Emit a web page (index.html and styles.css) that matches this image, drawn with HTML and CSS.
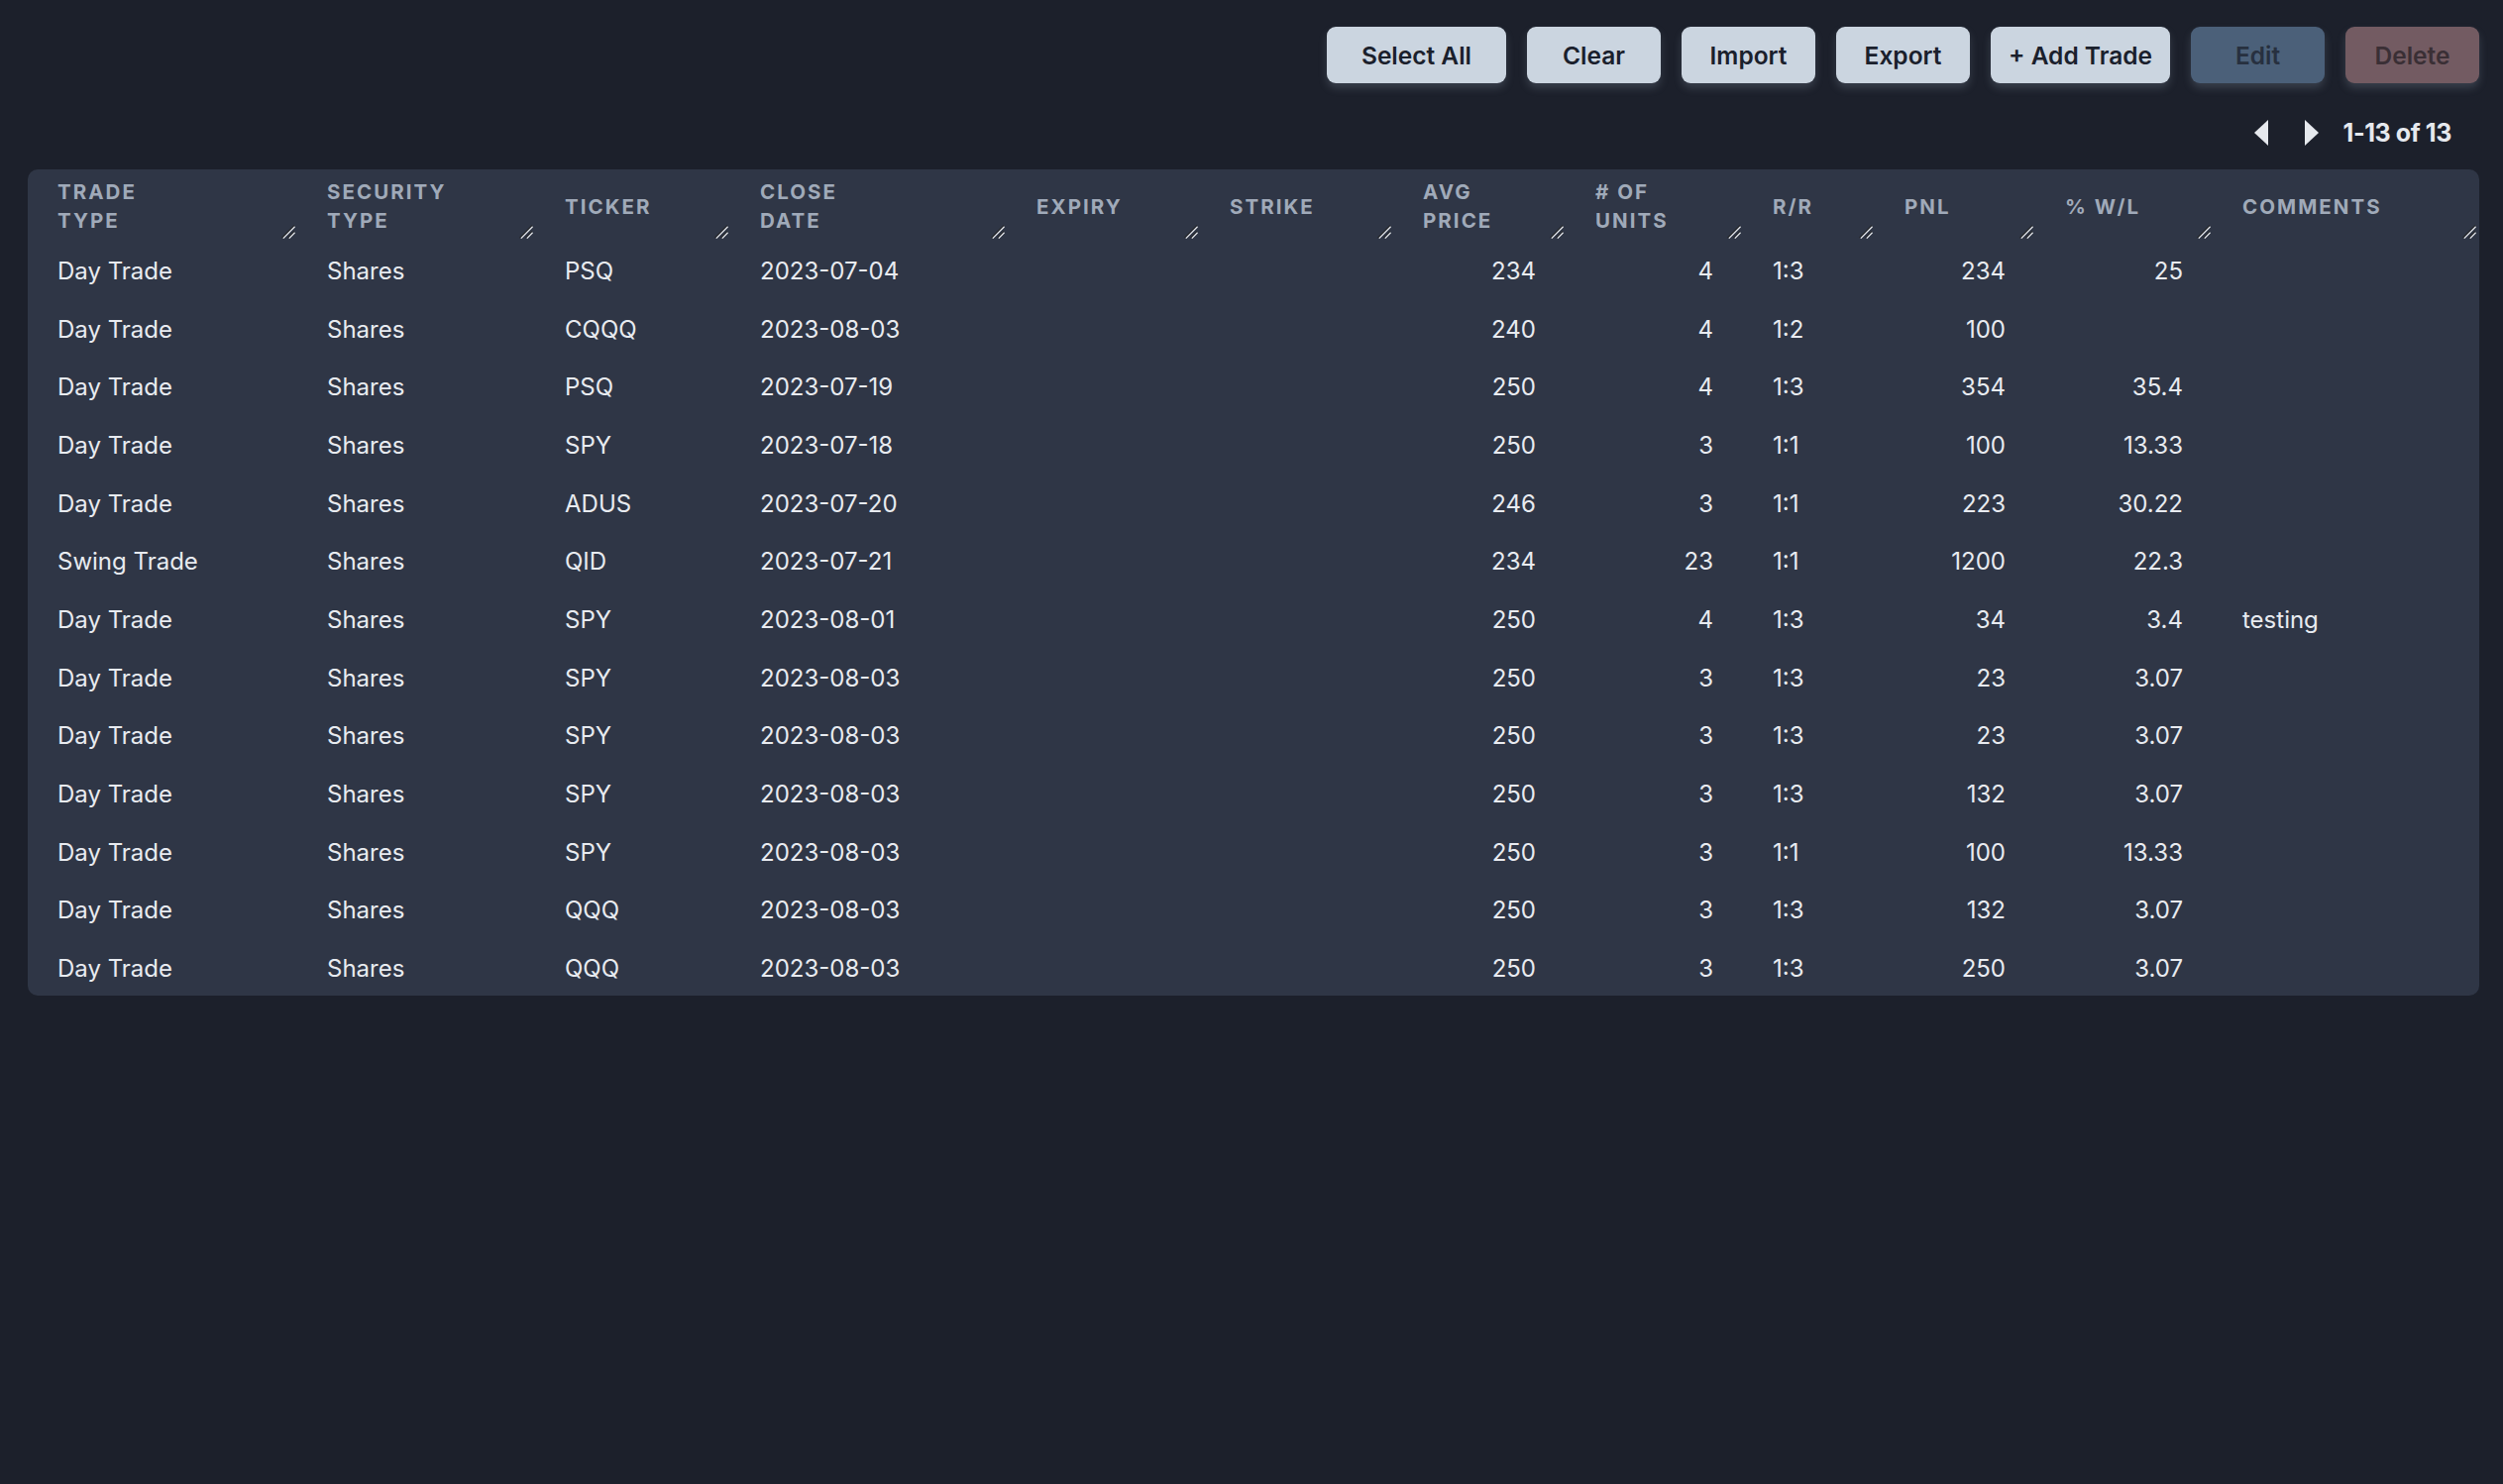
FILE: index.html
```html
<!DOCTYPE html>
<html lang="en">
<head>
<meta charset="utf-8">
<title>Trades</title>
<link rel="stylesheet" href="styles.css">
</head>
<body>
<div class="page">
  <div class="toolbar">
    <button class="btn btn-wide">Select All</button>
    <button class="btn">Clear</button>
    <button class="btn">Import</button>
    <button class="btn">Export</button>
    <button class="btn btn-wide">+ Add Trade</button>
    <button class="btn btn-edit" disabled>Edit</button>
    <button class="btn btn-delete" disabled>Delete</button>
  </div>
  <div class="pager">
    <svg class="arrow" width="14" height="26" viewBox="0 0 14 26"><polygon points="14,0 14,26 0,13" fill="#e6e9ee"/></svg>
    <svg class="arrow" width="14" height="26" viewBox="0 0 14 26"><polygon points="0,0 0,26 14,13" fill="#e6e9ee"/></svg>
    <span class="pager-text">1-13 of 13</span>
  </div>
  <div class="table-wrap">
    <table class="trades">
      <colgroup>
        <col class="c1"><col class="c2"><col class="c3"><col class="c4"><col class="c5"><col class="c6"><col class="c7"><col class="c8"><col class="c9"><col class="c10"><col class="c11"><col class="c12">
      </colgroup>
      <thead>
        <tr>
          <th>Trade<br>Type<svg class="grip" width="14" height="14" viewBox="0 0 14 14"><path d="M0.5 13 L13 0.5 M6.5 13 L13 6.5" stroke="#26282c" stroke-width="1.3"/><path d="M1.8 13.6 L13.6 1.8 M7.8 13.6 L13.6 7.8" stroke="#e4e6ea" stroke-width="1.3"/></svg></th>
          <th>Security<br>Type<svg class="grip" width="14" height="14" viewBox="0 0 14 14"><path d="M0.5 13 L13 0.5 M6.5 13 L13 6.5" stroke="#26282c" stroke-width="1.3"/><path d="M1.8 13.6 L13.6 1.8 M7.8 13.6 L13.6 7.8" stroke="#e4e6ea" stroke-width="1.3"/></svg></th>
          <th>Ticker<svg class="grip" width="14" height="14" viewBox="0 0 14 14"><path d="M0.5 13 L13 0.5 M6.5 13 L13 6.5" stroke="#26282c" stroke-width="1.3"/><path d="M1.8 13.6 L13.6 1.8 M7.8 13.6 L13.6 7.8" stroke="#e4e6ea" stroke-width="1.3"/></svg></th>
          <th>Close<br>Date<svg class="grip" width="14" height="14" viewBox="0 0 14 14"><path d="M0.5 13 L13 0.5 M6.5 13 L13 6.5" stroke="#26282c" stroke-width="1.3"/><path d="M1.8 13.6 L13.6 1.8 M7.8 13.6 L13.6 7.8" stroke="#e4e6ea" stroke-width="1.3"/></svg></th>
          <th>Expiry<svg class="grip" width="14" height="14" viewBox="0 0 14 14"><path d="M0.5 13 L13 0.5 M6.5 13 L13 6.5" stroke="#26282c" stroke-width="1.3"/><path d="M1.8 13.6 L13.6 1.8 M7.8 13.6 L13.6 7.8" stroke="#e4e6ea" stroke-width="1.3"/></svg></th>
          <th>Strike<svg class="grip" width="14" height="14" viewBox="0 0 14 14"><path d="M0.5 13 L13 0.5 M6.5 13 L13 6.5" stroke="#26282c" stroke-width="1.3"/><path d="M1.8 13.6 L13.6 1.8 M7.8 13.6 L13.6 7.8" stroke="#e4e6ea" stroke-width="1.3"/></svg></th>
          <th>Avg<br>Price<svg class="grip" width="14" height="14" viewBox="0 0 14 14"><path d="M0.5 13 L13 0.5 M6.5 13 L13 6.5" stroke="#26282c" stroke-width="1.3"/><path d="M1.8 13.6 L13.6 1.8 M7.8 13.6 L13.6 7.8" stroke="#e4e6ea" stroke-width="1.3"/></svg></th>
          <th># of<br>Units<svg class="grip" width="14" height="14" viewBox="0 0 14 14"><path d="M0.5 13 L13 0.5 M6.5 13 L13 6.5" stroke="#26282c" stroke-width="1.3"/><path d="M1.8 13.6 L13.6 1.8 M7.8 13.6 L13.6 7.8" stroke="#e4e6ea" stroke-width="1.3"/></svg></th>
          <th>R/R<svg class="grip" width="14" height="14" viewBox="0 0 14 14"><path d="M0.5 13 L13 0.5 M6.5 13 L13 6.5" stroke="#26282c" stroke-width="1.3"/><path d="M1.8 13.6 L13.6 1.8 M7.8 13.6 L13.6 7.8" stroke="#e4e6ea" stroke-width="1.3"/></svg></th>
          <th>PNL<svg class="grip" width="14" height="14" viewBox="0 0 14 14"><path d="M0.5 13 L13 0.5 M6.5 13 L13 6.5" stroke="#26282c" stroke-width="1.3"/><path d="M1.8 13.6 L13.6 1.8 M7.8 13.6 L13.6 7.8" stroke="#e4e6ea" stroke-width="1.3"/></svg></th>
          <th>% W/L<svg class="grip" width="14" height="14" viewBox="0 0 14 14"><path d="M0.5 13 L13 0.5 M6.5 13 L13 6.5" stroke="#26282c" stroke-width="1.3"/><path d="M1.8 13.6 L13.6 1.8 M7.8 13.6 L13.6 7.8" stroke="#e4e6ea" stroke-width="1.3"/></svg></th>
          <th>Comments<svg class="grip" width="14" height="14" viewBox="0 0 14 14"><path d="M0.5 13 L13 0.5 M6.5 13 L13 6.5" stroke="#26282c" stroke-width="1.3"/><path d="M1.8 13.6 L13.6 1.8 M7.8 13.6 L13.6 7.8" stroke="#e4e6ea" stroke-width="1.3"/></svg></th>
        </tr>
      </thead>
      <tbody>
        <tr><td>Day Trade</td><td>Shares</td><td>PSQ</td><td>2023-07-04</td><td></td><td></td><td class="num">234</td><td class="num">4</td><td>1:3</td><td class="num">234</td><td class="num">25</td><td></td></tr>
        <tr><td>Day Trade</td><td>Shares</td><td>CQQQ</td><td>2023-08-03</td><td></td><td></td><td class="num">240</td><td class="num">4</td><td>1:2</td><td class="num">100</td><td class="num"></td><td></td></tr>
        <tr><td>Day Trade</td><td>Shares</td><td>PSQ</td><td>2023-07-19</td><td></td><td></td><td class="num">250</td><td class="num">4</td><td>1:3</td><td class="num">354</td><td class="num">35.4</td><td></td></tr>
        <tr><td>Day Trade</td><td>Shares</td><td>SPY</td><td>2023-07-18</td><td></td><td></td><td class="num">250</td><td class="num">3</td><td>1:1</td><td class="num">100</td><td class="num">13.33</td><td></td></tr>
        <tr><td>Day Trade</td><td>Shares</td><td>ADUS</td><td>2023-07-20</td><td></td><td></td><td class="num">246</td><td class="num">3</td><td>1:1</td><td class="num">223</td><td class="num">30.22</td><td></td></tr>
        <tr><td>Swing Trade</td><td>Shares</td><td>QID</td><td>2023-07-21</td><td></td><td></td><td class="num">234</td><td class="num">23</td><td>1:1</td><td class="num">1200</td><td class="num">22.3</td><td></td></tr>
        <tr><td>Day Trade</td><td>Shares</td><td>SPY</td><td>2023-08-01</td><td></td><td></td><td class="num">250</td><td class="num">4</td><td>1:3</td><td class="num">34</td><td class="num">3.4</td><td>testing</td></tr>
        <tr><td>Day Trade</td><td>Shares</td><td>SPY</td><td>2023-08-03</td><td></td><td></td><td class="num">250</td><td class="num">3</td><td>1:3</td><td class="num">23</td><td class="num">3.07</td><td></td></tr>
        <tr><td>Day Trade</td><td>Shares</td><td>SPY</td><td>2023-08-03</td><td></td><td></td><td class="num">250</td><td class="num">3</td><td>1:3</td><td class="num">23</td><td class="num">3.07</td><td></td></tr>
        <tr><td>Day Trade</td><td>Shares</td><td>SPY</td><td>2023-08-03</td><td></td><td></td><td class="num">250</td><td class="num">3</td><td>1:3</td><td class="num">132</td><td class="num">3.07</td><td></td></tr>
        <tr><td>Day Trade</td><td>Shares</td><td>SPY</td><td>2023-08-03</td><td></td><td></td><td class="num">250</td><td class="num">3</td><td>1:1</td><td class="num">100</td><td class="num">13.33</td><td></td></tr>
        <tr><td>Day Trade</td><td>Shares</td><td>QQQ</td><td>2023-08-03</td><td></td><td></td><td class="num">250</td><td class="num">3</td><td>1:3</td><td class="num">132</td><td class="num">3.07</td><td></td></tr>
        <tr><td>Day Trade</td><td>Shares</td><td>QQQ</td><td>2023-08-03</td><td></td><td></td><td class="num">250</td><td class="num">3</td><td>1:3</td><td class="num">250</td><td class="num">3.07</td><td></td></tr>
      </tbody>
    </table>
  </div>
</div>
</body>
</html>
```

FILE: styles.css
```css
* { box-sizing: border-box; }
html, body {
  margin: 0;
  padding: 0;
  background: #1c202b;
  height: 100%;
}
body {
  font-family: "Inter", "Noto Sans", sans-serif;
  color: #e8ebf0;
}
.page {
  padding: 27px 24px 0 28px;
}
.toolbar {
  display: flex;
  justify-content: flex-end;
  gap: 21px;
}
.btn {
  font-family: "Inter", sans-serif;
  font-size: 24.5px;
  font-weight: 600;
  width: 135px;
  height: 57px;
  padding: 0;
  text-align: center;
  border: none;
  border-radius: 9px;
  background: #cbd5e0;
  color: #1a202c;
  box-shadow: 0 5px 9px rgba(160, 174, 192, 0.22);
}
.btn-wide { width: 181px; }
.btn-edit {
  background: #4b6079;
  color: #27303f;
}
.btn-delete {
  background: #735b62;
  color: #3a2f35;
}
.pager {
  display: flex;
  justify-content: flex-end;
  align-items: center;
  height: 26px;
  margin-top: 37px;
  margin-right: 28px;
}
.arrow { display: block; }
.arrow + .arrow { margin-left: 37px; }
.pager-text {
  margin-left: 25px;
  font-size: 25px;
  font-weight: 700;
  letter-spacing: -0.4px;
  color: #e6e9ee;
}
.table-wrap {
  margin-top: 24px;
  background: #2f3646;
  border-radius: 10px;
  overflow: hidden;
}
.trades {
  width: 2473px;
  table-layout: fixed;
  border-collapse: collapse;
}
.c1 { width: 272px; }
.c2 { width: 240px; }
.c3 { width: 197px; }
.c4 { width: 279px; }
.c5 { width: 195px; }
.c6 { width: 195px; }
.c7 { width: 174px; }
.c8 { width: 179px; }
.c9 { width: 133px; }
.c10 { width: 162px; }
.c11 { width: 179px; }
.c12 { width: 268px; }
.trades th {
  position: relative;
  height: 71px;
  padding: 3px 30px 0;
  text-align: left;
  vertical-align: middle;
  font-size: 20.5px;
  line-height: 29px;
  font-weight: 700;
  letter-spacing: 0.1em;
  text-transform: uppercase;
  color: #a0aab9;
}
.grip {
  position: absolute;
  right: 2px;
  bottom: 1px;
  display: block;
}
.trades td {
  height: 58.7px;
  padding: 5px 30px 0;
  font-size: 24px;
  line-height: 30px;
  vertical-align: middle;
  white-space: nowrap;
  color: #e8ebf0;
}
.trades td.num { text-align: right; }
```
